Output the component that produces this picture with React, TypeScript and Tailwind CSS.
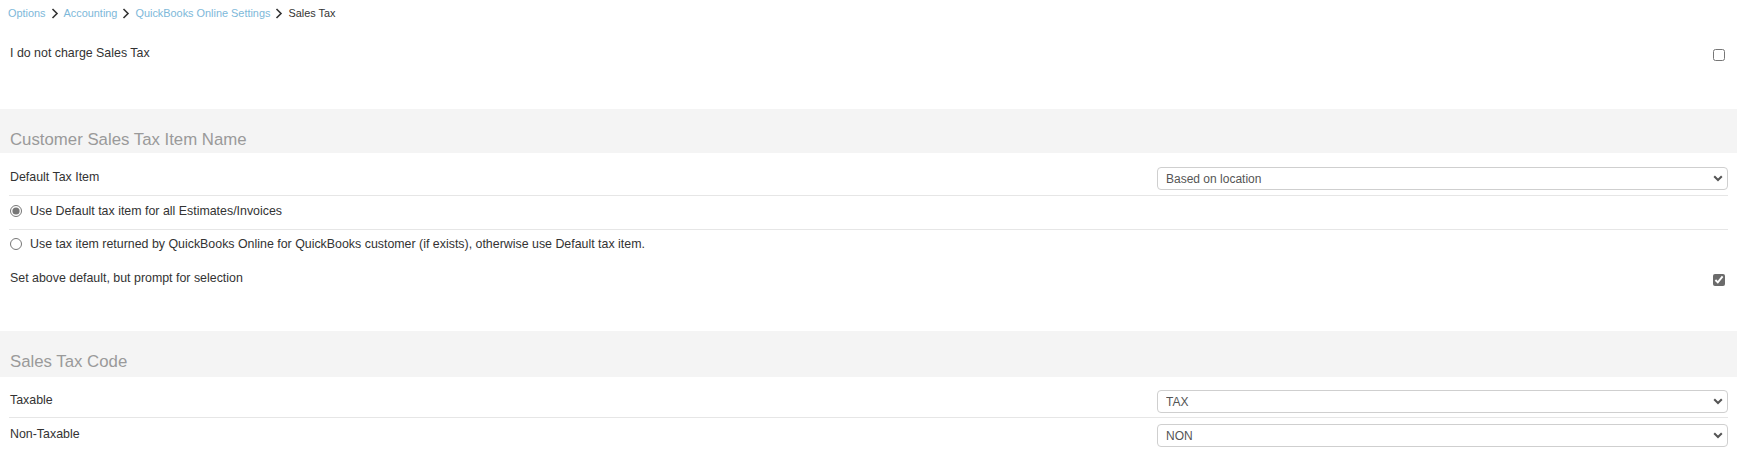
import React from 'react';

const crumbs = ['Options', 'Accounting', 'QuickBooks Online Settings'];

function Chevron() {
  return (
    <svg width="8" height="11" viewBox="0 0 8 11" className="mx-[5px] shrink-0">
      <polyline points="1.5,1 6,5.5 1.5,10" fill="none" stroke="#333" strokeWidth="1.6" />
    </svg>
  );
}

function Select({ value }: { value: string }) {
  return (
    <div className="relative w-full">
      <select
        defaultValue={value}
        className="w-full h-[23px] appearance-none rounded-[4px] border border-[#cfcfcf] bg-white pl-[8px] text-[12px] text-[#555] outline-none"
      >
        <option>{value}</option>
      </select>
      <svg
        width="10"
        height="7"
        viewBox="0 0 10 7"
        className="pointer-events-none absolute right-[5px] top-[8px]"
      >
        <polyline points="1.2,1.2 5,5 8.8,1.2" fill="none" stroke="#555" strokeWidth="2" />
      </svg>
    </div>
  );
}

function Band({ title, h }: { title: string; h: string }) {
  return (
    <div className={`bg-[#f4f4f4] pl-[10px] pt-[21px] ${h}`}>
      <h2 className="text-[16.8px] leading-[20px] text-[#9a9a9a]">{title}</h2>
    </div>
  );
}

function SelectRow({ label, value, pad }: { label: string; value: string; pad: string }) {
  return (
    <div className={`grid grid-cols-3 items-center border-b border-[#e6e6e6] ${pad}`}>
      <div className="col-span-2 mb-[3px] pl-px">{label}</div>
      <div className="pl-[2px]">
        <Select value={value} />
      </div>
    </div>
  );
}

export default function App() {
  return (
    <div
      className="min-h-screen w-full bg-white text-[12.4px] text-[#333]"
      style={{ fontFamily: '"Liberation Sans", Arial, sans-serif' }}
    >
      {/* breadcrumb */}
      <div className="flex h-[26px] items-center pl-[8px] text-[10.9px]">
        {crumbs.map((c) => (
          <React.Fragment key={c}>
            <a className="text-[#7db8d9]">{c}</a>
            <Chevron />
          </React.Fragment>
        ))}
        <span className="text-[#333]">Sales Tax</span>
      </div>

      {/* no sales tax */}
      <div className="mx-[9px] mt-[12px] flex h-[30px] items-center justify-between">
        <span className="pl-px">I do not charge Sales Tax</span>
        <input type="checkbox" className="m-[3px] mt-[6px] h-[12px] w-[12px] accent-[#6b6b6b]" />
      </div>
      <div className="h-[41px]" />

      <Band title="Customer Sales Tax Item Name" h="h-[44px]" />

      <div className="mx-[9px]">
        <SelectRow label="Default Tax Item" value="Based on location" pad="pt-[14px] pb-[5px]" />

        <label className="flex items-center border-b border-[#e6e6e6] pt-[7px] pb-[10px]">
          <input
            type="radio"
            name="taxitem"
            defaultChecked
            className="ml-px mr-[8px] h-[12px] w-[12px] accent-[#777]"
          />
          <span className="leading-[16px]">Use Default tax item for all Estimates/Invoices</span>
        </label>

        <label className="flex items-center pt-[6px]">
          <input type="radio" name="taxitem" className="ml-px mr-[8px] h-[12px] w-[12px] accent-[#777]" />
          <span className="leading-[16px]">
            Use tax item returned by QuickBooks Online for QuickBooks customer (if exists), otherwise use Default tax item.
          </span>
        </label>

        <div className="mt-[18px] flex h-[16px] items-center justify-between">
          <span className="pl-px">Set above default, but prompt for selection</span>
          <input
            type="checkbox"
            defaultChecked
            className="m-[3px] mt-[7px] h-[12px] w-[12px] accent-[#6b6b6b]"
          />
        </div>
      </div>
      <div className="h-[45px]" />

      <Band title="Sales Tax Code" h="h-[46px]" />

      <div className="mx-[9px]">
        <SelectRow label="Taxable" value="TAX" pad="pt-[13px] pb-[4px]" />
        <div className="grid grid-cols-3 items-center pt-[6px]">
          <div className="col-span-2 mb-[2px] pl-px">Non-Taxable</div>
          <div className="pl-[2px]">
            <Select value="NON" />
          </div>
        </div>
      </div>
    </div>
  );
}
